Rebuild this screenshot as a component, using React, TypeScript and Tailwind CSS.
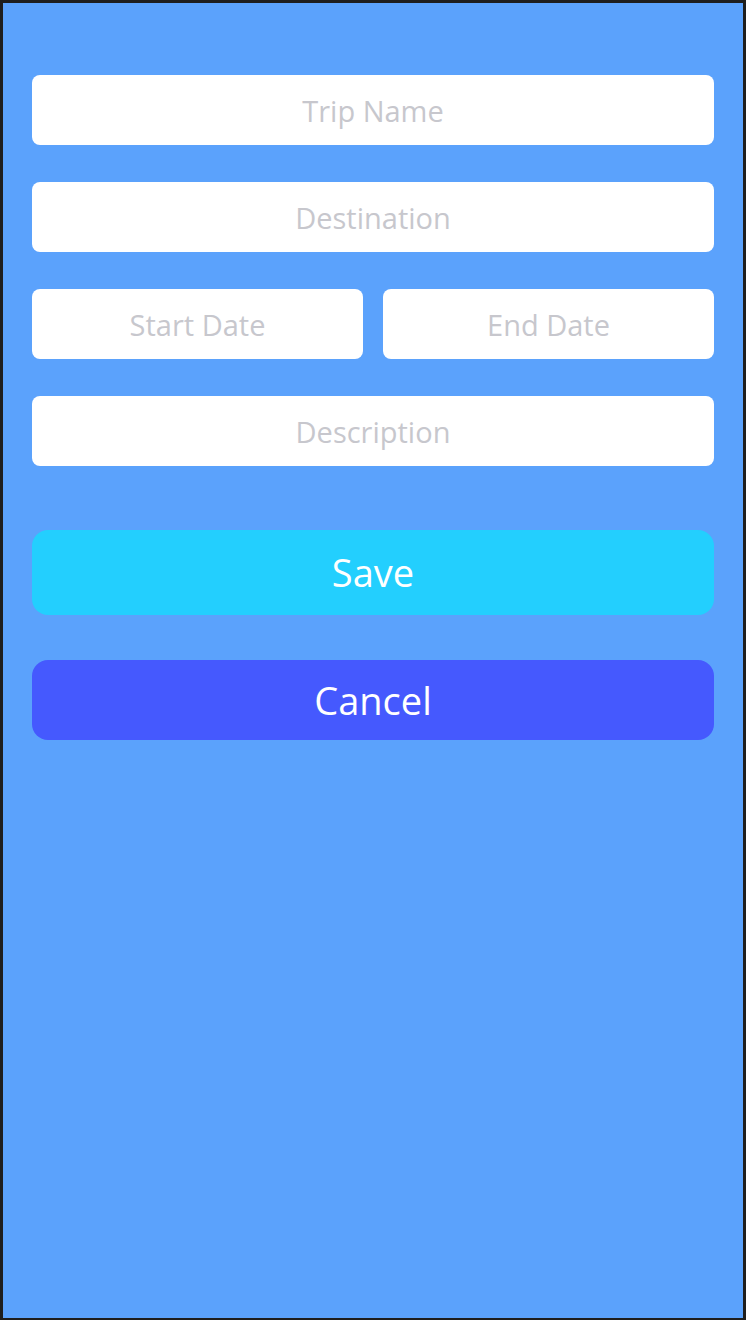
import React from "react";

const Field: React.FC<{ placeholder: string; className?: string }> = ({ placeholder, className = "" }) => (
  <input
    type="text"
    placeholder={placeholder}
    className={`h-[70px] w-full rounded-lg bg-white text-center text-[29px] text-gray-700 placeholder:text-[#c7c7cd] outline-none ${className}`}
  />
);

const App: React.FC = () => {
  return (
    <div className="h-[1320px] bg-[#1e1e1e] p-[3px] pb-[2px] font-['Open_Sans',sans-serif]">
      <div className="h-full bg-[#5ba2fc] px-[29px] pt-[72px]">
        <div className="flex flex-col gap-[37px]">
          <Field placeholder="Trip Name" />
          <Field placeholder="Destination" />
          <div className="flex gap-[20px]">
            <Field placeholder="Start Date" />
            <Field placeholder="End Date" />
          </div>
          <Field placeholder="Description" />
        </div>
        <button className="mt-[64px] flex h-[85px] w-full items-center justify-center rounded-2xl bg-[#23cffe] text-[38px] text-white">
          Save
        </button>
        <button className="mt-[45px] flex h-[80px] w-full items-center justify-center rounded-2xl bg-[#4559fe] text-[38px] text-white">
          Cancel
        </button>
      </div>
    </div>
  );
};

export default App;
